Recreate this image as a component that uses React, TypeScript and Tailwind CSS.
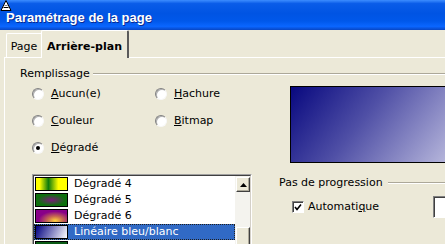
import React from 'react';

type Item = { label: string; swatch: string; selected?: boolean };

const items: Item[] = [
  { label: 'Dégradé 4', swatch: 'bg-[linear-gradient(90deg,#ffff00_12%,#0c7a0c_40%,#ffff00_72%)]' },
  { label: 'Dégradé 5', swatch: 'bg-[radial-gradient(ellipse_at_center,#7a1a7a_0%,#0e700e_65%)]' },
  { label: 'Dégradé 6', swatch: 'bg-[radial-gradient(ellipse_at_62%_88%,#ffd23c_0%,#c86a50_28%,#880088_62%)]' },
  { label: 'Linéaire bleu/blanc', swatch: 'bg-[linear-gradient(115deg,#000080_0%,#ffffff_100%)]', selected: true },
  // last row is cut by the window edge, only the swatch shows
  { label: '', swatch: 'bg-[#0a5a14]' },
];

function Radio({ checked, children }: { checked?: boolean; children: React.ReactNode }) {
  return (
    <div className="flex items-center gap-[7px]">
      <span className="w-[12px] h-[12px] rounded-full bg-white border border-t-[#808080] border-l-[#808080] border-r-[#f8f8f8] border-b-[#f8f8f8] shadow-[inset_1px_1px_0_#b0b0b0] flex items-center justify-center">
        {checked && <span className="w-[4px] h-[4px] rounded-full bg-black" />}
      </span>
      <span>{children}</span>
    </div>
  );
}

export default function App() {
  return (
    <div className="w-[445px] h-[244px] overflow-hidden bg-[#ece9d8] text-black text-[11px] leading-[12px] font-['DejaVu_Sans',sans-serif] relative flex flex-col">
      {/* Title bar */}
      <div className="h-[30px] shrink-0 bg-[linear-gradient(180deg,#3d8dff_0%,#0a5ce8_12%,#0054e3_45%,#0058ea_70%,#0a66ff_88%,#0846c4_100%)] flex items-center pl-[6px] pt-[5px]">
        <span className="text-white font-bold text-[13px] font-['Liberation_Sans',sans-serif] [text-shadow:1px_1px_0_#0a2a90]">
          Paramétrage de la page
        </span>
      </div>
      <svg className="absolute left-0 top-0" width="12" height="12" viewBox="0 0 12 12">
        <polygon points="6,0.5 1,10.5 11,10.5" fill="white" stroke="black" strokeWidth="1" />
        <line x1="3.5" y1="7.5" x2="8.5" y2="7.5" stroke="black" strokeWidth="1" />
        <line x1="4.5" y1="5.5" x2="7.5" y2="5.5" stroke="#808080" strokeWidth="1" />
      </svg>

      <div className="flex flex-1">
        {/* window frame */}
        <div className="w-[3px] bg-[#0a50dc]" />
        <div className="w-[1px] bg-[#6d9cf0]" />

        <div className="flex-1 flex flex-col pl-[4px]">
          {/* Tabs */}
          <div className="h-[27px] shrink-0 flex items-end pl-[2px]">
            <div className="h-[24px] w-[35px] border-t border-l border-white rounded-tl-[2px] flex items-center justify-center pt-[3px]">
              Page
            </div>
            <div className="relative z-10 h-[28px] mb-[-1px] w-[88px] bg-[#ece9d8] border-t border-l border-white border-r-2 border-r-[#5a5a5a] rounded-t-[2px] flex items-start justify-center pt-[10px] font-bold">
              Arrière-plan
            </div>
          </div>

          {/* Panel */}
          <div className="flex-1 border-t border-l border-white flex flex-col">
            <div className="h-[12px] mt-[10px] flex items-center pl-[15px]">
              <span>Remplissage</span>
              <div className="flex-1 ml-[3px] h-[2px] border-t border-[#aca899] border-b border-b-white" />
            </div>

            <div className="flex">
              {/* Left column */}
              <div className="w-[274px] shrink-0 pl-[27px] flex flex-col">
                <div className="grid grid-cols-[123px_auto]">
                  <div className="h-[27px] flex items-center">
                    <Radio><span className="underline">A</span>ucun(e)</Radio>
                  </div>
                  <div className="h-[27px] flex items-center">
                    <Radio><span className="underline">H</span>achure</Radio>
                  </div>
                  <div className="h-[27px] flex items-center">
                    <Radio><span className="underline">C</span>ouleur</Radio>
                  </div>
                  <div className="h-[27px] flex items-center">
                    <Radio><span className="underline">B</span>itmap</Radio>
                  </div>
                  <div className="h-[27px] flex items-center">
                    <Radio checked><span className="underline">D</span>égradé</Radio>
                  </div>
                </div>

                {/* Gradient list */}
                <div className="mt-[13px] w-[220px] h-[90px] border border-t-[#a0a0a0] border-l-[#a0a0a0] border-r-white border-b-white">
                  <div className="h-full border border-t-[#404040] border-l-[#404040] border-r-[#d4d0c8] border-b-[#d4d0c8] bg-white flex">
                    <div className="flex-1 flex flex-col">
                      {items.map((it, i) => (
                        <div
                          key={i}
                          className={`h-[16px] shrink-0 flex items-center gap-[6px] pl-[1px] ${
                            it.selected
                              ? 'bg-[#316ac5] text-white outline outline-1 outline-dotted outline-[#202020] -outline-offset-1'
                              : ''
                          }`}
                        >
                          <span className={`w-[33px] h-[14px] border border-black ${it.swatch}`} />
                          {it.label && <span>{it.label}</span>}
                        </div>
                      ))}
                    </div>
                    {/* Scrollbar */}
                    <div className="w-[15px] flex flex-col bg-[#f4f3ee] pl-[1px]">
                      <div className="h-[15px] mt-[1px] bg-[#ece9d8] border border-t-white border-l-white border-r-[#404040] border-b-[#404040] shadow-[inset_-1px_-1px_0_#aca899] flex items-center justify-center">
                        <svg width="7" height="4" viewBox="0 0 7 4">
                          <polygon points="3.5,0 7,4 0,4" fill="black" />
                        </svg>
                      </div>
                      <div className="mt-[35px] flex-1 bg-[#ece9d8] border border-t-white border-l-white border-r-[#404040] border-b-[#404040] shadow-[inset_-1px_-1px_0_#aca899]" />
                    </div>
                  </div>
                </div>
              </div>

              {/* Right column */}
              <div className="w-[170px] shrink-0 flex flex-col">
                <div className="ml-[11px] mt-[6px] w-[160px] h-[77px] border border-black bg-[linear-gradient(128deg,#08087f_0%,#5050a6_45%,#b8b8dc_100%)]" />

                <div className="mt-[14px] h-[12px] flex items-center">
                  <span className="whitespace-nowrap">Pas de progression</span>
                  <div className="flex-1 ml-[5px] h-[2px] border-t border-[#aca899] border-b border-b-white" />
                </div>

                <div className="mt-[7px] h-[22px] flex items-center pl-[13px]">
                  <div className="w-[141px] shrink-0 flex items-center gap-[4px]">
                    <span className="w-[12px] h-[12px] bg-white border border-t-[#808080] border-l-[#808080] border-r-white border-b-white shadow-[inset_1px_1px_0_#404040] flex items-center justify-center">
                      <svg width="8" height="8" viewBox="0 0 8 8">
                        <polyline points="1,4 3,6.5 7,1.5" fill="none" stroke="black" strokeWidth="1.6" />
                      </svg>
                    </span>
                    <span>
                      Automati<span className="underline">q</span>ue
                    </span>
                  </div>
                  <div className="w-[40px] h-[22px] shrink-0 bg-white border border-t-[#808080] border-l-[#808080] border-r-white border-b-white shadow-[inset_1px_1px_0_#404040]" />
                </div>
              </div>
            </div>
          </div>
        </div>
      </div>
    </div>
  );
}
